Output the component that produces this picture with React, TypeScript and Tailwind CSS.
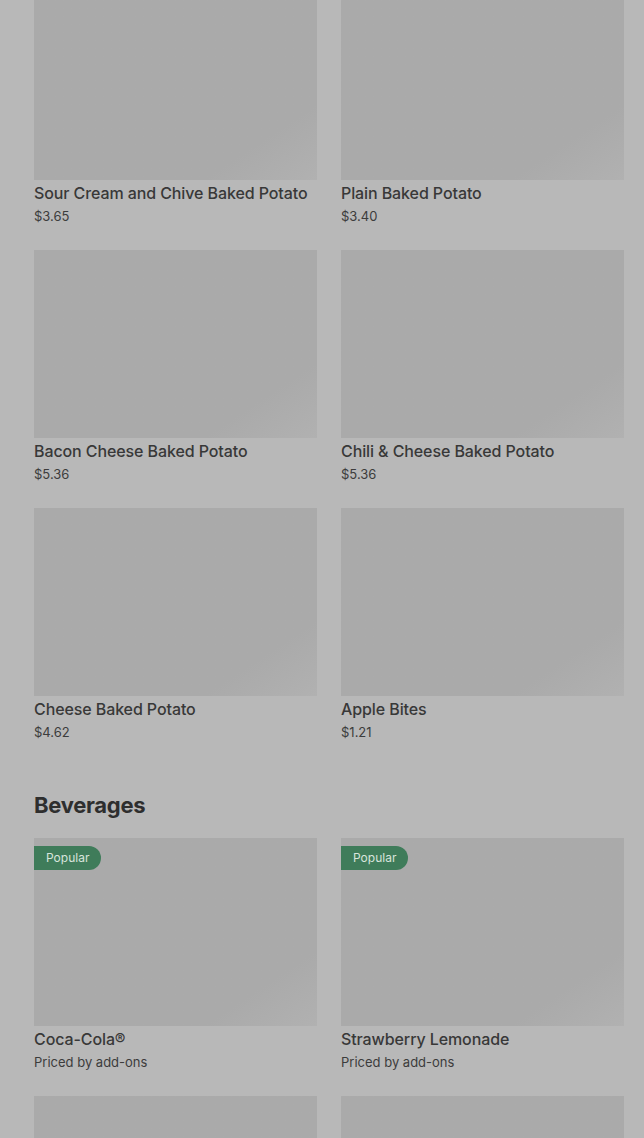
const sides = [
  { name: 'Sour Cream and Chive Baked Potato', price: '$3.65' },
  { name: 'Plain Baked Potato', price: '$3.40' },
  { name: 'Bacon Cheese Baked Potato', price: '$5.36' },
  { name: 'Chili & Cheese Baked Potato', price: '$5.36' },
  { name: 'Cheese Baked Potato', price: '$4.62' },
  { name: 'Apple Bites', price: '$1.21' },
];

const beverages = [
  { name: 'Coca-Cola®', price: 'Priced by add-ons', popular: true },
  { name: 'Strawberry Lemonade', price: 'Priced by add-ons', popular: true },
];

interface ItemProps {
  name?: string;
  price?: string;
  popular?: boolean;
}

function MenuItem({ name, price, popular }: ItemProps) {
  return (
    <div className="flex flex-col">
      <div className="relative h-[188px] bg-gradient-to-br from-[#aaaaaa] via-[#aaaaaa] via-80% to-[#b1b1b1]">
        {popular && (
          <span className="absolute left-0 top-2 flex h-6 items-center rounded-r-full bg-[#3f7c5a] pl-3 pr-3 text-[12px] text-[#d8e4dc]">
            Popular
          </span>
        )}
      </div>
      {name && (
        <div className="pt-[1px]">
          <div className="text-[16px] leading-[24px] font-medium tracking-[-0.1px] text-[#383838]">{name}</div>
          <div className="text-[13px] leading-[22px] text-[#3c3c3c]">{price}</div>
        </div>
      )}
    </div>
  );
}

export default function App() {
  return (
    <div
      className="h-[1138px] overflow-hidden bg-[#b8b8b8] px-[34px] pr-[20px]"
      style={{ fontFamily: 'Inter, "Liberation Sans", sans-serif' }}
    >
      <div className="-mt-2 grid grid-cols-2 gap-x-6 gap-y-[23px]">
        {sides.map((item) => (
          <MenuItem key={item.name} {...item} />
        ))}
      </div>

      <h2 className="mt-[46px] mb-[17px] text-[22px] leading-[32px] font-bold tracking-[-0.3px] text-[#2e2e2e]">
        Beverages
      </h2>

      <div className="grid grid-cols-2 gap-x-6 gap-y-[23px]">
        {beverages.map((item) => (
          <MenuItem key={item.name} {...item} />
        ))}
        {/* next row, only the image tops show */}
        <MenuItem />
        <MenuItem />
      </div>
    </div>
  );
}
